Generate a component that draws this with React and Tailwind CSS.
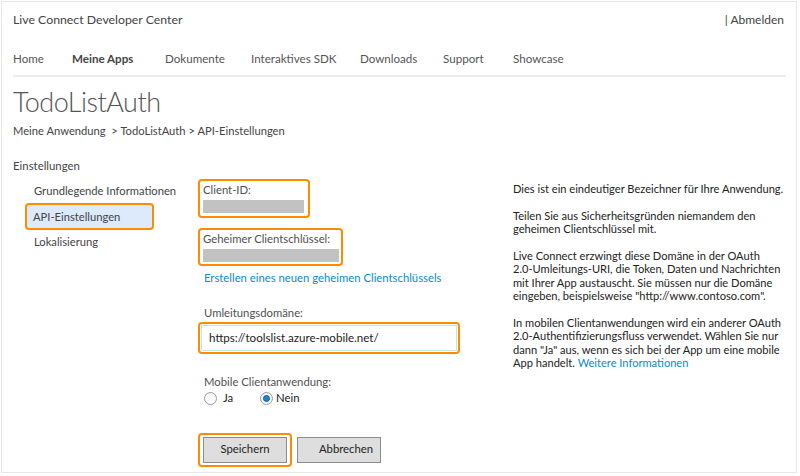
import React from "react";

const font = { fontFamily: 'Lato, "Open Sans", sans-serif' };

function Radio({ checked }) {
  return (
    <span className="relative inline-flex h-[13px] w-[13px] items-center justify-center rounded-full border border-[#9a9a9a] bg-gradient-to-b from-[#f4f4f4] to-white">
      {checked && <span className="h-[7px] w-[7px] rounded-full bg-[#1a86d0] border border-[#0f5f9e]" />}
    </span>
  );
}

export default function App() {
  return (
    <div className="h-[476px] w-[800px] overflow-hidden bg-white text-[#505050]" style={font}>
      <div className="ml-px mt-px h-[472px] w-[796px] border border-[#e8e8e8] pl-[11px]">
        {/* header */}
        <div className="flex h-[36px] items-center justify-between pr-[12px] text-[#444]">
          <span className="text-[12.3px]">Live Connect Developer Center</span>
          <span className="text-[12px]">| Abmelden</span>
        </div>
        {/* nav */}
        <div className="mr-[10px] flex h-[39px] items-center border-b-2 border-[#ececec] pt-[4px] text-[11.6px] text-[#555]">
          <span className="w-[59px]">Home</span>
          <span className="w-[93px] font-bold text-[#444]">Meine Apps</span>
          <span className="w-[86px]">Dokumente</span>
          <span className="w-[109px]">Interaktives SDK</span>
          <span className="w-[83px]">Downloads</span>
          <span className="w-[70px]">Support</span>
          <span>Showcase</span>
        </div>
        {/* title */}
        <div className="mt-[9px] h-[32px] text-[27px] font-light leading-[32px] tracking-[-0.5px] text-[#555]">TodoListAuth</div>
        <div className="mt-[5px] text-[11.2px] leading-[16px] text-[#444]">
          Meine Anwendung&nbsp;&nbsp;&gt; TodoListAuth &gt; API-Einstellungen
        </div>
        <div className="mt-[19px] text-[11.4px] leading-[16px] text-[#444]">Einstellungen</div>

        <div className="mt-[5px] flex">
          {/* left nav */}
          <div className="w-[185px] pt-[3px] text-[11.2px] text-[#444]">
            <div className="pl-[21px] leading-[17px]">Grundlegende Informationen</div>
            <div className="ml-[12px] mt-[4px] w-[129px] rounded-[4px] border-[2.5px] border-[#ff8c00] bg-[#ddeafc] py-[3px] pl-[6px] leading-[17px]">
              API-Einstellungen
            </div>
            <div className="mt-[3px] pl-[21px] leading-[17px]">Lokalisierung</div>
          </div>

          {/* form */}
          <div className="w-[315px] text-[11.3px]">
            <div className="w-[112px] rounded-[4px] border-[2.5px] border-[#ff8c00] px-[3px] pb-[3px] pt-[1px]">
              <div className="leading-[16px]">Client-ID:</div>
              <div className="mt-[2px] h-[13px] w-[101px] bg-[#c2c2c2]" />
            </div>
            <div className="mt-[10px] w-[145px] rounded-[4px] border-[2.5px] border-[#ff8c00] px-[3px] pb-[2px] pt-[1px]">
              <div className="whitespace-nowrap leading-[16px]">Geheimer Clientschlüssel:</div>
              <div className="mt-[2px] h-[13px] w-[136px] bg-[#c2c2c2]" />
            </div>
            <div className="mt-[4px] pl-[6px] leading-[16px] text-[#0a8bd0]">Erstellen eines neuen geheimen Clientschlüssels</div>

            <div className="mt-[19px] pl-[6px] leading-[16px]">Umleitungsdomäne:</div>
            <div className="mt-[1px] w-[262px] rounded-[4px] border-[2.5px] border-[#ff8c00] p-px">
              <div className="flex h-[26px] items-center border border-[#bfe9ec] pl-[7px] text-[11.6px] text-[#222]">
                https://toolslist.azure-mobile.net/
              </div>
            </div>

            <div className="mt-[20px] pl-[6px] leading-[16px]">Mobile Clientanwendung:</div>
            <div className="mt-0 flex items-center pl-[6px] text-[#222]">
              <Radio />
              <span className="ml-[6px] w-[37px]">Ja</span>
              <Radio checked />
              <span className="ml-[3px]">Nein</span>
            </div>

            <div className="mt-[26px] flex items-center">
              <div className="rounded-[4px] border-[2.5px] border-[#ff8c00] px-[3px] py-[2px]">
                <div className="flex h-[26px] w-[84px] items-center justify-center border border-[#8c8c8c] bg-[#dedede] text-[#222]">
                  Speichern
                </div>
              </div>
              <div className="ml-[5px] flex h-[26px] w-[84px] items-center justify-center border border-[#8c8c8c] bg-[#dedede] pl-[14px] text-[#222]">
                Abbrechen
              </div>
            </div>
          </div>

          {/* help text */}
          <div className="w-[282px] whitespace-nowrap pt-[3px] text-[11.1px] leading-[13.4px] text-[#222]">
            <p>Dies ist ein eindeutiger Bezeichner für Ihre Anwendung.</p>
            <p className="mt-[13.4px]">
              Teilen Sie aus Sicherheitsgründen niemandem den
              <br />
              geheimen Clientschlüssel mit.
            </p>
            <p className="mt-[13.4px]">
              Live Connect erzwingt diese Domäne in der OAuth
              <br />
              2.0-Umleitungs-URI, die Token, Daten und Nachrichten
              <br />
              mit Ihrer App austauscht. Sie müssen nur die Domäne
              <br />
              eingeben, beispielsweise "http://www.contoso.com".
            </p>
            <p className="mt-[13.4px]">
              In mobilen Clientanwendungen wird ein anderer OAuth
              <br />
              2.0-Authentifizierungsfluss verwendet. Wählen Sie nur
              <br />
              dann "Ja" aus, wenn es sich bei der App um eine mobile
              <br />
              App handelt. <span className="text-[#0a8bd0]">Weitere Informationen</span>
            </p>
          </div>
        </div>
      </div>
    </div>
  );
}
